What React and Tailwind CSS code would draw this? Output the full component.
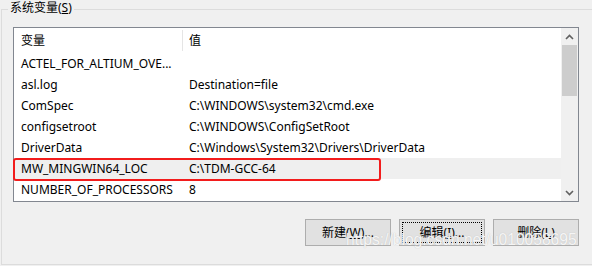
import "react";

const rows = [
  ["ACTEL_FOR_ALTIUM_OVE...", ""],
  ["asl.log", "Destination=file"],
  ["ComSpec", "C:\\WINDOWS\\system32\\cmd.exe"],
  ["configsetroot", "C:\\WINDOWS\\ConfigSetRoot"],
  ["DriverData", "C:\\Windows\\System32\\Drivers\\DriverData"],
  ["MW_MINGWIN64_LOC", "C:\\TDM-GCC-64"],
  ["NUMBER_OF_PROCESSORS", "8"],
];

const font = {
  fontFamily: '"Segoe UI", "Noto Sans", "Noto Sans CJK SC", sans-serif',
};

function Btn({ label, hot, rest, focused }) {
  return (
    <button className="w-[86px] h-[27px] border border-[#adadad] bg-[#e1e1e1] text-[12px] text-black flex items-center justify-center p-[2px]">
      <span
        className={
          "w-full h-full flex items-center justify-center " +
          (focused ? "border border-dotted border-black" : "border border-transparent")
        }
      >
        {label}(<span className="underline">{hot}</span>){rest}
      </span>
    </button>
  );
}

export default function App() {
  return (
    <div className="w-[592px] h-[266px] bg-[#f0f0f0] overflow-hidden relative" style={font}>
      {/* group box */}
      <div className="relative mt-[9px] ml-[1px] w-[600px] h-[256px] border border-r-0 border-[#dcdcdc]">
        <span className="absolute left-[6px] -top-[10px] px-[2px] bg-[#f0f0f0] text-[12px] leading-[16px] text-black">
          系统变量(<span className="underline">S</span>)
        </span>

        {/* list view */}
        <div className="ml-[11px] mt-[17px] w-[566px] h-[175px] border border-[#828790] bg-white flex">
          <div className="flex-1 flex flex-col">
            <div className="h-[25px] flex items-center text-[12px] text-black">
              <div className="w-[169px] h-[21px] pl-[7px] flex items-center border-r border-[#e5e5e5]">变量</div>
              <div className="pl-[6px]">值</div>
            </div>
            {rows.map(([k, v], i) => (
              <div
                key={k}
                className={
                  "h-[21px] flex items-center text-[12px] text-black " +
                  (i === 5 ? "bg-[#efefef]" : "")
                }
              >
                <div className="w-[169px] pl-[7px] whitespace-nowrap">{k}</div>
                <div className="pl-[6px] whitespace-nowrap">{v}</div>
              </div>
            ))}
          </div>
          {/* scrollbar */}
          <div className="w-[17px] bg-[#f0f0f0] flex flex-col">
            <div className="h-[17px] flex items-center justify-center">
              <svg width="9" height="6" viewBox="0 0 9 6">
                <path d="M1 5 L4.5 1.5 L8 5" fill="none" stroke="#606060" strokeWidth="1.6" />
              </svg>
            </div>
            <div className="ml-[1px] w-[15px] h-[51px] bg-[#cdcdcd]" />
            <div className="flex-1" />
            <div className="h-[17px] flex items-center justify-center">
              <svg width="9" height="6" viewBox="0 0 9 6">
                <path d="M1 1 L4.5 4.5 L8 1" fill="none" stroke="#606060" strokeWidth="1.6" />
              </svg>
            </div>
          </div>
        </div>

        {/* buttons */}
        <div className="flex justify-end gap-[8px] mt-[17px] pr-[22px]">
          <Btn label="新建" hot="W" rest="..." />
          <Btn label="编辑" hot="I" rest="..." focused />
          <Btn label="删除" hot="L" rest="" />
        </div>
      </div>

      {/* annotation */}
      <div className="absolute left-[13px] top-[158px] w-[368px] h-[23px] border-2 border-[#f21c1c] rounded-[3px]" />

      {/* watermark */}
      <div
        className="absolute left-[346px] top-[228px] text-[15.6px] text-white/85 [text-shadow:0_0_1px_#b5b5b5] whitespace-nowrap"
        style={{ fontFamily: '"Liberation Sans", Arial, sans-serif' }}
      >
        https://blog.csdn.net/u010058695
      </div>
    </div>
  );
}
